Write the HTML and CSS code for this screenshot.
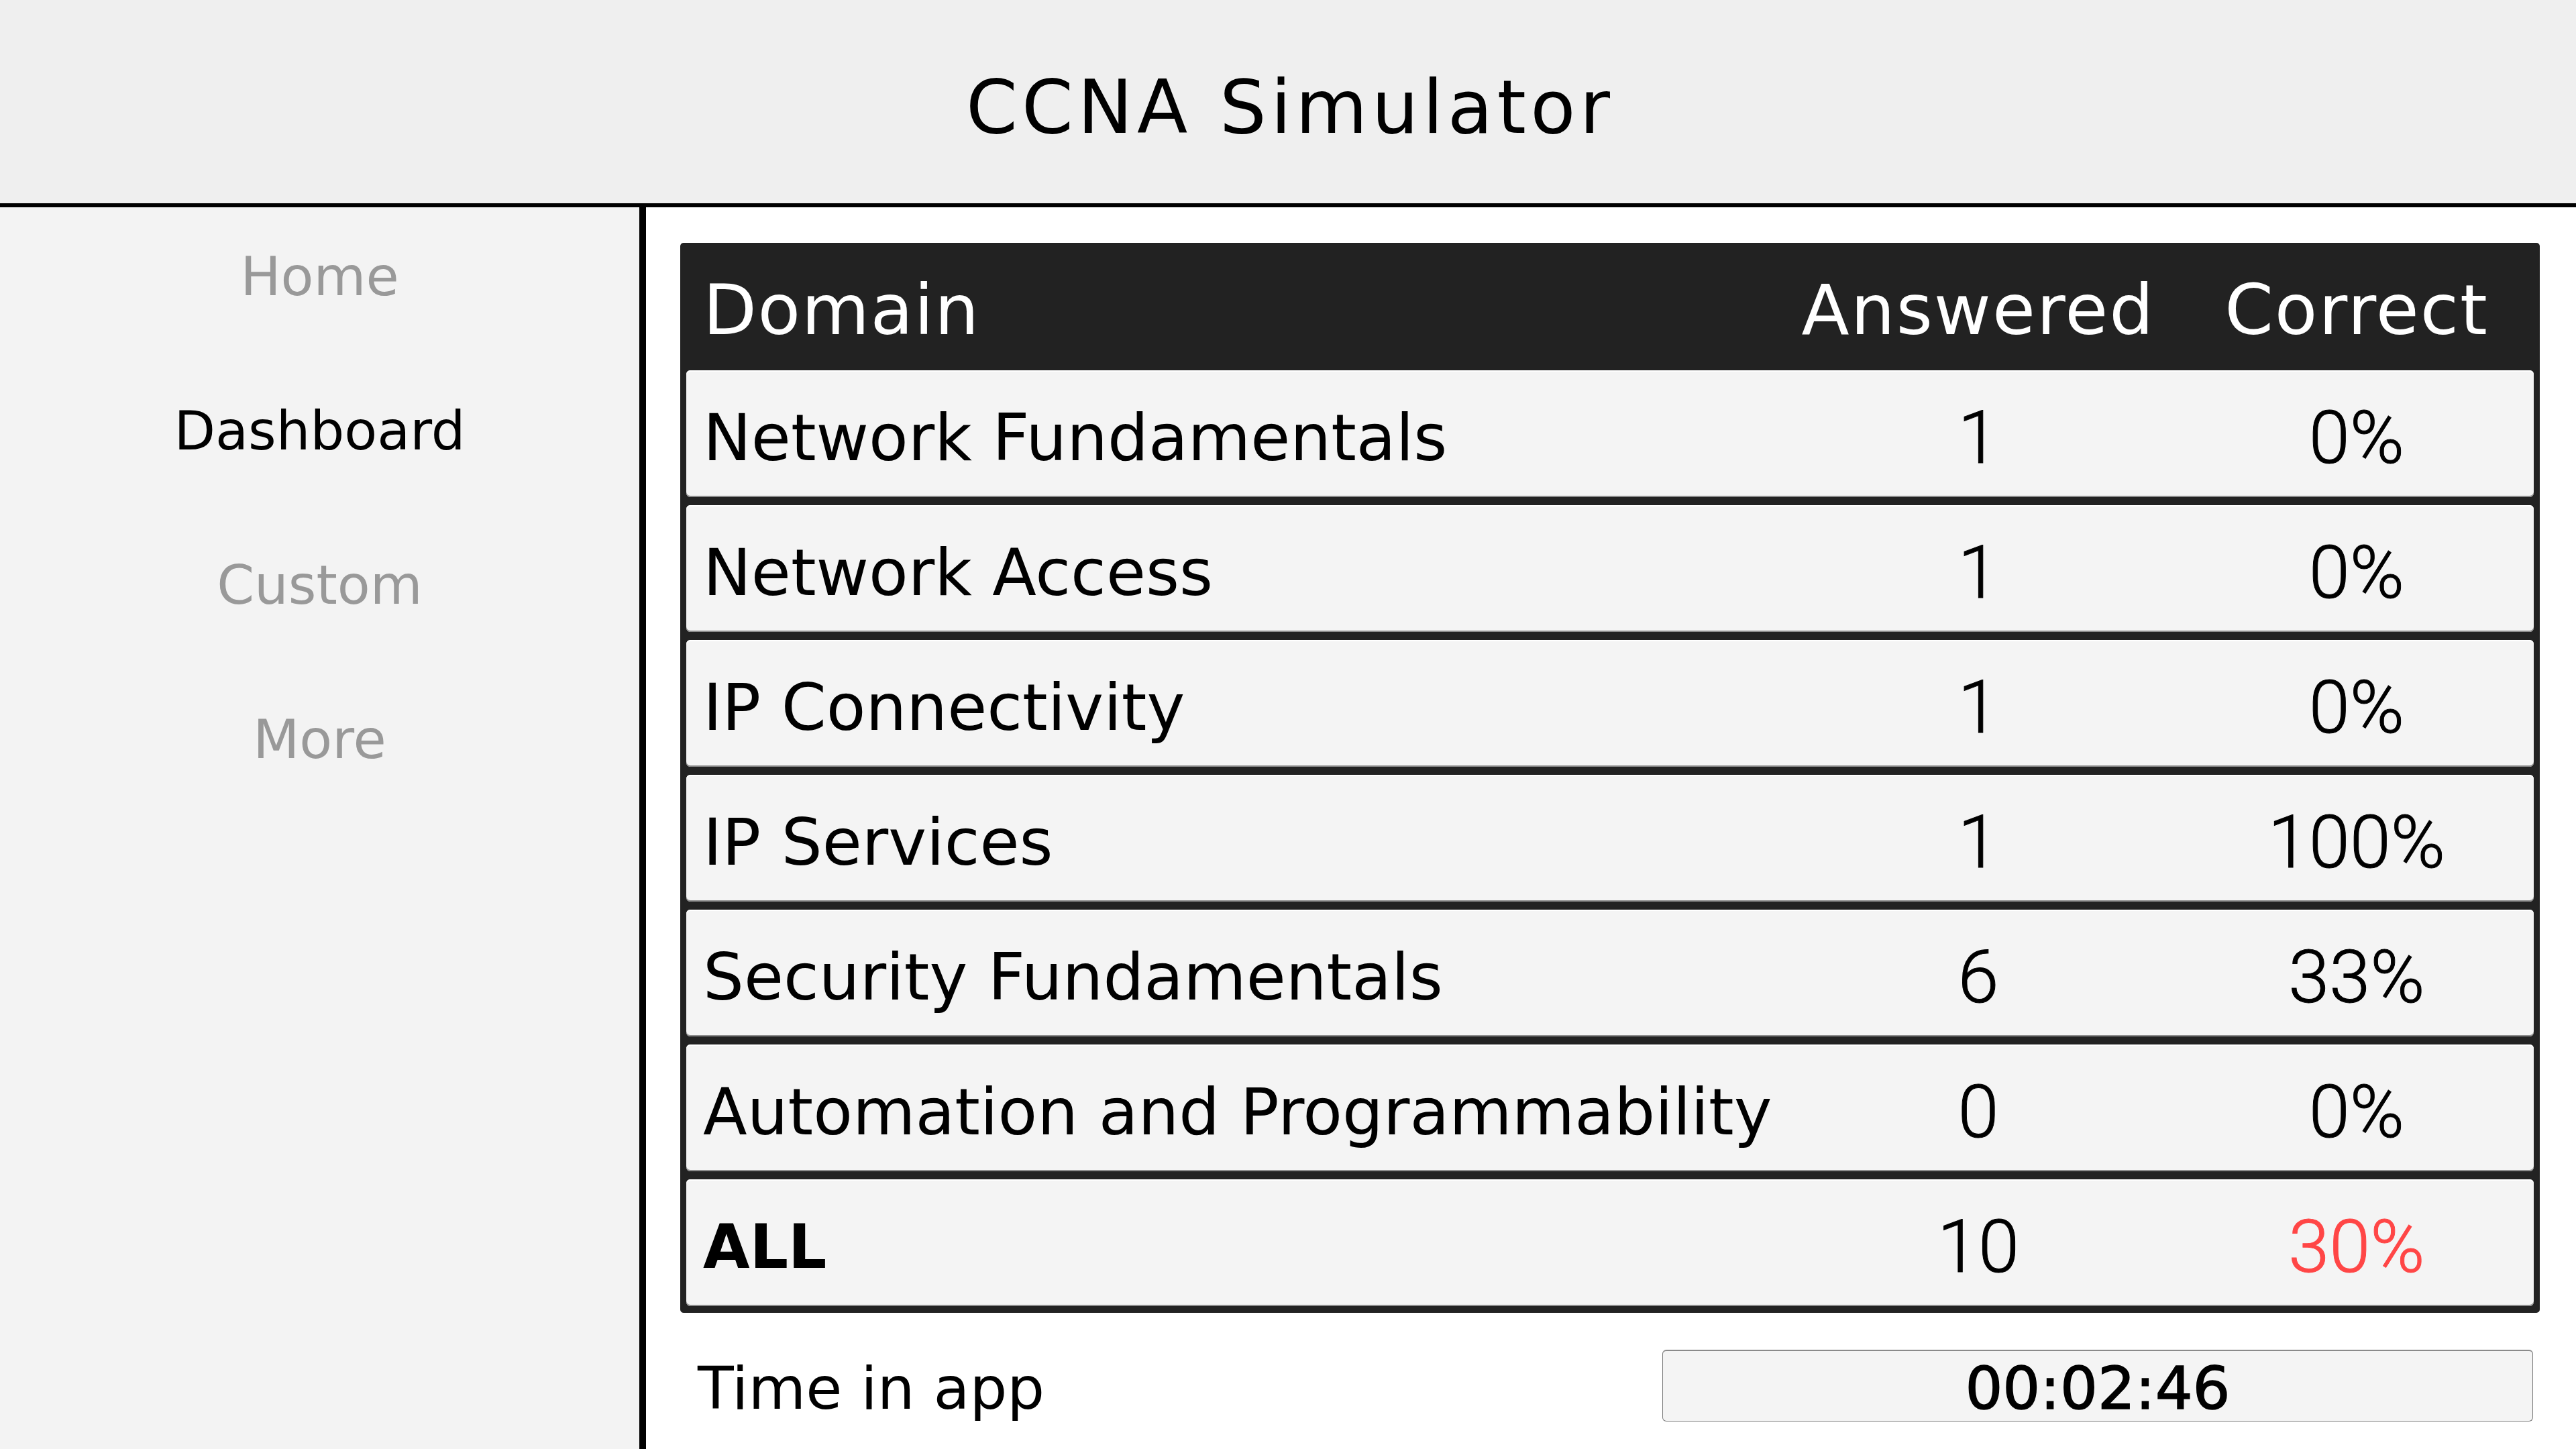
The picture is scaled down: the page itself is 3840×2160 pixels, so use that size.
FILE: index.html
```html
<!DOCTYPE html>
<html lang="en">
<head>
<meta charset="utf-8">
<title>CCNA Simulator</title>
<link rel="stylesheet" href="styles.css">
</head>
<body>
<div class="app">
  <header class="topbar">
    <h1 class="title">CCNA Simulator</h1>
  </header>
  <div class="body">
    <aside class="sidebar">
      <nav class="nav">
        <a class="nav-item">Home</a>
        <a class="nav-item active">Dashboard</a>
        <a class="nav-item">Custom</a>
        <a class="nav-item">More</a>
      </nav>
    </aside>
    <main class="main">
      <section class="stats">
        <div class="stats-head">
          <div class="cell domain">Domain</div>
          <div class="cell num-head">Answered</div>
          <div class="cell num-head">Correct</div>
        </div>
        <div class="stats-rows">
          <div class="row">
            <div class="cell domain">Network Fundamentals</div>
            <div class="cell num">1</div>
            <div class="cell num">0%</div>
          </div>
          <div class="row">
            <div class="cell domain">Network Access</div>
            <div class="cell num">1</div>
            <div class="cell num">0%</div>
          </div>
          <div class="row">
            <div class="cell domain">IP Connectivity</div>
            <div class="cell num">1</div>
            <div class="cell num">0%</div>
          </div>
          <div class="row">
            <div class="cell domain">IP Services</div>
            <div class="cell num">1</div>
            <div class="cell num">100%</div>
          </div>
          <div class="row">
            <div class="cell domain">Security Fundamentals</div>
            <div class="cell num">6</div>
            <div class="cell num">33%</div>
          </div>
          <div class="row">
            <div class="cell domain">Automation and Programmability</div>
            <div class="cell num">0</div>
            <div class="cell num">0%</div>
          </div>
          <div class="row total">
            <div class="cell domain">ALL</div>
            <div class="cell num">10</div>
            <div class="cell num bad">30%</div>
          </div>
        </div>
      </section>
      <div class="time-row">
        <span class="time-label">Time in app</span>
        <div class="time-box">00:02:46</div>
      </div>
    </main>
  </div>
</div>
</body>
</html>
```
FILE: styles.css
```css
html, body {
  margin: 0;
  padding: 0;
}
body {
  width: 3840px;
  height: 2160px;
  overflow: hidden;
  background: #ffffff;
  font-family: "DejaVu Sans", sans-serif;
  color: #000;
}
.app {
  display: flex;
  flex-direction: column;
  height: 2160px;
}
.topbar {
  box-sizing: border-box;
  height: 309px;
  padding-top: 17px;
  background: #efefef;
  border-bottom: 6px solid #000;
  display: flex;
  align-items: center;
  justify-content: center;
}
.title {
  margin: 0;
  font-weight: normal;
  font-size: 110px;
  letter-spacing: 6.4px;
  padding-left: 6.4px;
  line-height: normal;
}
.body {
  flex: 1;
  display: flex;
  min-height: 0;
}
.sidebar {
  width: 953px;
  flex: none;
  background: #f3f3f3;
  border-right: 10px solid #000;
}
.nav {
  display: flex;
  flex-direction: column;
  align-items: center;
  gap: 130px;
  padding-top: 54px;
}
.nav-item {
  display: block;
  height: 100px;
  line-height: 100px;
  font-size: 80px;
  color: #999999;
}
.nav-item.active {
  color: #000;
}
.main {
  flex: 1;
  padding: 53px 54px 0 51px;
}
.stats {
  background: #222222;
  border-radius: 5px;
  padding: 0 9px 10px 9px;
}
.stats-head,
.row {
  display: grid;
  grid-template-columns: 1fr 600px 528px;
  align-items: center;
  box-sizing: border-box;
}
.stats-head {
  height: 190px;
  padding: 10px 0 0 25px;
  color: #ffffff;
  font-size: 104px;
}
.stats-head .domain {
  letter-spacing: 1.5px;
}
.num-head {
  text-align: center;
  letter-spacing: 2px;
}
.stats-rows {
  display: flex;
  flex-direction: column;
  gap: 12px;
}
.row {
  height: 189px;
  padding: 12px 0 0 25px;
  background: #f4f4f4;
  border-radius: 6px;
  box-shadow: inset 0 2px 0 #ffffff, inset 0 -2px 0 #8c8c8c;
  font-size: 96px;
}
.cell {
  white-space: nowrap;
}
.num {
  text-align: center;
  font-family: Roboto, "DejaVu Sans", sans-serif;
  font-weight: 300;
  font-size: 110px;
  -webkit-text-stroke: 1px currentColor;
}
.total .domain {
  font-weight: bold;
  font-size: 90px;
}
.bad {
  color: #ff4646;
}
.time-row {
  display: flex;
  align-items: center;
  justify-content: space-between;
  margin-top: 53px;
  padding: 0 10px 0 26px;
}
.time-label {
  font-size: 88px;
  padding-top: 8px;
}
.time-box {
  box-sizing: border-box;
  width: 1298px;
  height: 107px;
  background: #f4f4f4;
  border: 1px solid #7a7a7a;
  border-top: 2px solid #8a8a8a;
  border-radius: 6px;
  display: flex;
  align-items: center;
  justify-content: center;
  font-size: 88px;
  padding-top: 6px;
  -webkit-text-stroke: 1.5px currentColor;
}
```
